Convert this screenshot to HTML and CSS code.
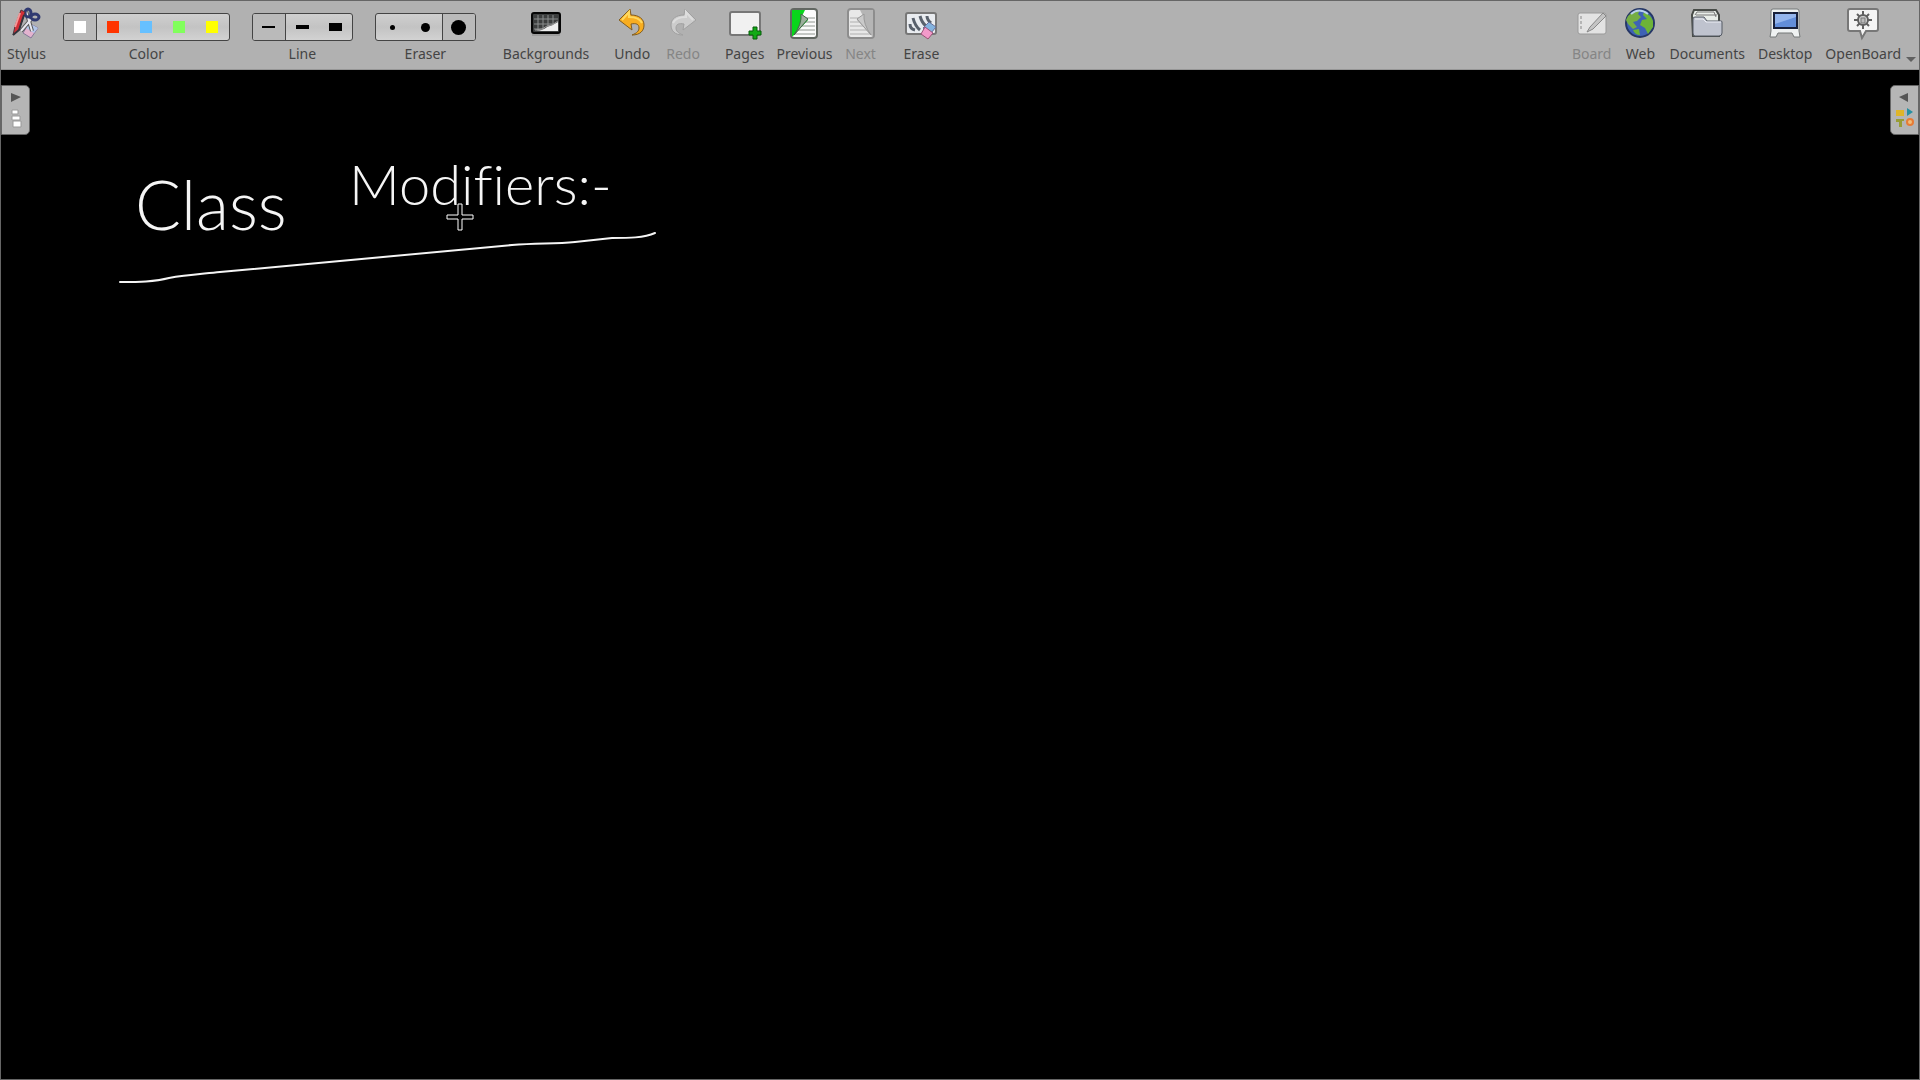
FILE: index.html
```html
<!DOCTYPE html>
<html lang="en">
  <head>
    <meta charset="UTF-8" />
    <meta name="viewport" content="width=device-width, initial-scale=1.0" />
    <title>OpenBoard</title>
    <link rel="stylesheet" href="styles.css">
  </head>
  <body>
    <header class="toolbar">
      <button type="button" class="tool">
        <svg class="icon" viewBox="0 0 32 32">
          <path d="M19 16l9 5-7 10-8-5z" fill="#e3b3cf" stroke="#85799a"/>
          <path d="M19 16l9 5-4 5-8-5z" fill="#b1c6e9"/>
          <path d="M16 4l6 20M23 10L11 24" stroke="#555" stroke-width="4"/>
          <path d="M16 4l6 20M23 10L11 24" stroke="#e8e8f0" stroke-width="2"/>
          <ellipse cx="18" cy="6" rx="3" ry="4" fill="none" stroke="#2f3971" stroke-width="3"/>
          <ellipse cx="25" cy="10" rx="4" ry="3" fill="none" stroke="#2f3971" stroke-width="3"/>
          <path d="M11 3l4 2-6 18-6 5 2-9z" fill="#d22f37" stroke="#51363d"/>
          <path d="M10 6L5 20" stroke="#f39999" stroke-width="2"/>
          <path d="M14 8L9 23l-6 5" fill="none" stroke="#33333c" stroke-width="2"/>
        </svg>
        <span>Stylus</span>
      </button>

      <div class="palettes">
        <div class="palette" role="group" aria-labelledby="colorLabel">
          <div class="choices">
            <button type="button" class="choice selected" aria-label="White"><i class="swatch white"></i></button>
            <button type="button" class="choice" aria-label="Red"><i class="swatch red"></i></button>
            <button type="button" class="choice" aria-label="Blue"><i class="swatch blue"></i></button>
            <button type="button" class="choice" aria-label="Green"><i class="swatch green"></i></button>
            <button type="button" class="choice" aria-label="Yellow"><i class="swatch yellow"></i></button>
          </div>
          <span id="colorLabel">Color</span>
        </div>
        <div class="palette" role="group" aria-labelledby="lineLabel">
          <div class="choices">
            <button type="button" class="choice selected" aria-label="Fine line"><i class="line fine"></i></button>
            <button type="button" class="choice" aria-label="Medium line"><i class="line medium"></i></button>
            <button type="button" class="choice" aria-label="Strong line"><i class="line strong"></i></button>
          </div>
          <span id="lineLabel">Line</span>
        </div>
        <div class="palette" role="group" aria-labelledby="eraserLabel">
          <div class="choices">
            <button type="button" class="choice" aria-label="Small eraser"><i class="dot small"></i></button>
            <button type="button" class="choice" aria-label="Medium eraser"><i class="dot middle"></i></button>
            <button type="button" class="choice selected" aria-label="Large eraser"><i class="dot large"></i></button>
          </div>
          <span id="eraserLabel">Eraser</span>
        </div>
      </div>

      <button type="button" class="tool">
        <svg class="icon" viewBox="0 0 32 32">
          <rect x="2" y="6" width="28" height="20" rx="2" fill="#3b3d3d" stroke="#050505" stroke-width="2"/>
          <path d="M4 12h24M4 17h24M4 22h16M8 8v16M13 8v16M18 8v12M23 8v10" stroke="#8b8e8e"/>
          <path d="M4 24q9 0 13-4 5-1 11-5v9z" fill="#eee"/>
          <path d="M5 23q8 0 12-4 5 0 11-5" fill="none" stroke="#999"/>
          <path d="M2 28h28" stroke="#888" stroke-width="1"/>
        </svg>
        <span>Backgrounds</span>
      </button>

      <div class="tools history">
        <button type="button" class="tool">
          <svg class="icon" viewBox="0 0 32 32">
            <path d="M3 13L14 2l1 6c8 0 13 4 13 10s-4 10-12 10c5-2 7-4 7-7 0-4-3-5-8-4l1 6z" fill="#f8ad20" stroke="#805c20"/>
            <path d="M6 13l7-8v5c8 0 11 2 13 6" fill="none" stroke="#ffd85e" stroke-width="2"/>
          </svg>
          <span>Undo</span>
        </button>
        <button type="button" class="tool" disabled>
          <svg class="icon" viewBox="0 0 32 32">
            <path d="M29 13L18 2l-1 6C9 8 4 12 4 18s4 10 12 10c-5-2-7-4-7-7 0-4 3-5 8-4l-1 6z" fill="#ccc" stroke="#a0a0a0"/>
            <path d="M26 13l-7-8v5C11 10 8 12 6 16" fill="none" stroke="#ddd" stroke-width="2"/>
          </svg>
          <span>Redo</span>
        </button>
      </div>

      <div class="tools pages">
        <button type="button" class="tool">
          <svg class="icon" viewBox="0 0 32 32">
            <rect x="1" y="5" width="30" height="23" rx="2" fill="#f1f1f1" stroke="#777" stroke-width="2"/>
            <path d="M24 20h4v4h4v4h-4v4h-4v-4h-4v-4h4z" fill="#12aa16" stroke="#075c0a"/>
          </svg>
          <span>Pages</span>
        </button>
        <button type="button" class="tool">
          <svg class="icon" viewBox="0 0 32 32">
            <rect x="3" y="2" width="26" height="29" rx="3" fill="#fbfbfb" stroke="#626762" stroke-width="2"/>
            <path d="M14 11h13M12 15h15M10 19h17M8 23h19M6 27h21" stroke="#909690"/>
            <path d="M4 3h13l-3 6 6 4L5 29H4z" fill="#08d51b"/>
            <path d="M13 7l7 5L6 28q8-11 7-21z" fill="#9cae9c" stroke="#426648"/>
          </svg>
          <span>Previous</span>
        </button>
        <button type="button" class="tool" disabled>
          <svg class="icon" viewBox="0 0 32 32">
            <rect x="3" y="2" width="26" height="29" rx="3" fill="#e8e8e8" stroke="#8d8d8d" stroke-width="2"/>
            <path d="M5 11h13M5 15h15M5 19h17M5 23h19M5 27h21" stroke="#b0b0b0"/>
            <path d="M28 3H15l3 6-6 4 15 16h1z" fill="#b5b5b5"/>
            <path d="M19 7l-7 5 14 16Q18 17 19 7z" fill="#cacaca" stroke="#999"/>
          </svg>
          <span>Next</span>
        </button>
      </div>

      <button type="button" class="tool">
        <svg class="icon" viewBox="0 0 32 32">
          <rect x="1" y="6" width="30" height="21" rx="2" fill="#e9ecf0" stroke="#777" stroke-width="2"/>
          <path d="M5 17q0 5 5 6M8 11q2 8 7 12M15 9q2 7 6 10M22 9q0 4 4 7" fill="none" stroke="#59616c" stroke-width="3"/>
          <path d="M24 15l7 5-5 6-8-5z" fill="#83b3df" stroke="#686f98"/>
          <path d="M20 20l8 6-5 6-7-5z" fill="#f39aca" stroke="#985477"/>
        </svg>
        <span>Erase</span>
      </button>

      <nav class="tools modes">
        <button type="button" class="tool" disabled>
          <svg class="icon" viewBox="0 0 32 32">
            <rect x="2" y="6" width="28" height="21" rx="2" fill="#e3e3e3" stroke="#999"/>
            <path d="M5 9v15" stroke="#b5b5b5" stroke-width="2" stroke-dasharray="3 2"/>
            <path d="M27 6L14 20l-3 5 6-3L30 9z" fill="#c4c4c4" stroke="#888"/>
          </svg>
          <span>Board</span>
        </button>
        <button type="button" class="tool">
          <svg class="icon" viewBox="0 0 32 32">
            <circle cx="16" cy="16" r="14" fill="#3e62b5" stroke="#263766" stroke-width="2"/>
            <path d="M4 9q5-6 12-6l-2 4 3 3-4 4-4 1 4 5-4 2-5-5-2-4z" fill="#75ae43"/>
            <path d="M20 5q7 3 9 9v6l-5 7-3-6-5-3 2-5 5-1-4-4zM9 23l6-1 1 6q-5 0-7-5z" fill="#6db338"/>
            <path d="M7 7Q15 0 24 7" fill="none" stroke="#b9d1ed" stroke-width="2"/>
          </svg>
          <span>Web</span>
        </button>
        <button type="button" class="tool">
          <svg class="icon" viewBox="0 0 32 32">
            <path d="M2 29L1 8l2-5h22l3 5v21z" fill="#e9eee9" stroke="#484c48" stroke-width="2"/>
            <path d="M4 8l2-3h17l2 5M5 8h21" fill="none" stroke="#777"/>
            <path d="M4 10h9l3 4h14q1 0 1 1v11q0 3-3 3H4q-2 0-2-3V12q0-2 2-2z" fill="#bfc3ce" stroke="#555b65"/>
            <path d="M4 12h8l3 3h15" fill="none" stroke="#edf0f6"/>
          </svg>
          <span>Documents</span>
        </button>
        <button type="button" class="tool">
          <svg class="icon" viewBox="0 0 32 32">
            <path d="M2 4q0-2 2-2h24q2 0 2 2v20l1 6h-6l-2-4H9l-2 4H1l1-6z" fill="#eff2f2" stroke="#747878"/>
            <rect x="5" y="6" width="23" height="15" fill="#628eda" stroke="#18213c" stroke-width="2"/>
            <path d="M6 7h21v3L6 17z" fill="#94b5ed"/>
          </svg>
          <span>Desktop</span>
        </button>
        <button type="button" class="tool">
          <svg class="icon" viewBox="0 0 32 32">
            <path d="M3 2h26q2 0 2 2v18q0 2-2 2H19l-4 7-2-7H3q-2 0-2-2V4q0-2 2-2z" fill="#f4f4f4" stroke="#777" stroke-width="2"/>
            <path d="M16 4v18M7 13h18M10 7l12 12M22 7L10 19" stroke="#606060" stroke-width="2"/>
            <circle cx="16" cy="13" r="5" fill="#d5d5d5" stroke="#606060" stroke-width="2"/>
            <rect x="14" y="11" width="4" height="5" fill="#bbb" stroke="#777"/>
          </svg>
          <span>OpenBoard</span>
        </button>
        <svg class="more" viewBox="0 0 10 6"><path d="M0 0h10L5 5z" fill="#606060"/></svg>
      </nav>
    </header>

    <main class="board">
      <p class="ink class-word">Class</p>
      <p class="ink modifiers-word">Modifiers:-</p>
      <svg class="strokes" width="680" height="240">
        <path d="M119 212C138 212 153 212 168 208C185 205 201 204 219 202L339 191L511 175C537 173 553 174 574 172L611 168C627 168 643 168 654 163" fill="none" stroke="#f5f5f5" stroke-width="2" stroke-linecap="round"/>
        <path d="M457 134h4v11h11v4h-11v11h-4v-11h-11v-4h11z" fill="#000" stroke="#fff"/>
      </svg>

      <button type="button" class="tab tab-left" aria-label="Show pages">
        <svg width="27" height="48" viewBox="0 0 27 48">
          <path d="M9 7l10 4-10 5z" fill="#555"/>
          <path d="M10 24h6v4h-6zM10 30h8v4h-8zM11 35h8v6h-8z" fill="#fff" stroke="#999"/>
        </svg>
      </button>
      <button type="button" class="tab tab-right" aria-label="Show library">
        <svg width="27" height="48" viewBox="0 0 27 48">
          <path d="M17 7L8 11l9 5z" fill="#555"/>
          <path d="M5 24h8v6H5z" fill="#dfb52a"/>
          <path d="M16 22l6 4-6 4z" fill="#258fa2"/>
          <path d="M5 33h8v2h-2v6H8v-5H5z" fill="#989d35"/>
          <circle cx="19" cy="36" r="3" fill="#f1bd7a" stroke="#e77b35" stroke-width="2"/>
        </svg>
      </button>
    </main>
  </body>
</html>
```
FILE: styles.css
```css
* {
  box-sizing: border-box;
}
body {
  margin: 0;
  min-height: 100vh;
  display: flex;
  flex-direction: column;
  background-color: #000;
  border: 1px solid #666;
  font-family: "Noto Sans", sans-serif;
  font-size: 14px;
  line-height: 18px;
  color: #444;
}
button {
  margin: 0;
  padding: 0;
  border: none;
  background: none;
  font: inherit;
  color: inherit;
}
.toolbar {
  display: flex;
  align-items: flex-start;
  gap: 27px;
  padding: 6px 3px 6px 6px;
  background-color: #b1b1b1;
  border-bottom: 1px solid #969696;
}
.tool {
  display: flex;
  flex-direction: column;
  align-items: center;
  gap: 6px;
}
.tool:disabled {
  color: #858585;
}
.icon {
  width: 32px;
  height: 32px;
  overflow: visible;
  fill: none;
}
.tools {
  display: flex;
  gap: 13px;
}
.history {
  gap: 16px;
  margin: 0 -2px;
}
.pages {
  gap: 12px;
}
.palettes {
  display: flex;
  gap: 22px;
  margin-left: -10px;
}
.palette {
  display: flex;
  flex-direction: column;
  align-items: center;
  gap: 4px;
  padding-top: 6px;
}
.choices {
  display: flex;
  border: 1px solid #444;
  border-radius: 3px;
  background: linear-gradient(#cfcfcf, #c3c3c3 50%, #d2d2d2);
  overflow: hidden;
}
.choice {
  width: 33px;
  height: 26px;
  display: flex;
  align-items: center;
  justify-content: center;
}
.choice.selected {
  background-color: #bababa;
}
.choice.selected:first-child {
  border-right: 1px solid #444;
}
.choice.selected:last-child {
  border-left: 1px solid #444;
}
.swatch {
  width: 12px;
  height: 12px;
}
.white {
  background-color: #fff;
}
.red {
  background-color: #ff3400;
}
.blue {
  background-color: #66c0ff;
}
.green {
  background-color: #81ff5c;
}
.yellow {
  background-color: #ff0;
}
.line {
  width: 13px;
  background-color: #000;
}
.fine {
  height: 2px;
}
.medium {
  height: 4px;
}
.strong {
  height: 8px;
}
.dot {
  border-radius: 50%;
  background-color: #000;
}
.small {
  width: 5px;
  height: 5px;
}
.middle {
  width: 9px;
  height: 9px;
}
.large {
  width: 15px;
  height: 15px;
}
.modes {
  margin-left: auto;
}
.more {
  width: 10px;
  height: 6px;
  margin-left: -8px;
  align-self: flex-end;
}
.board {
  position: relative;
  flex: 1;
  background-color: #000;
}
.ink {
  position: absolute;
  margin: 0;
  font-family: Lato, sans-serif;
  font-weight: 300;
  font-variant-ligatures: none;
  line-height: 80px;
  color: #f5f5f5;
  white-space: nowrap;
}
.class-word {
  left: 134px;
  top: 94px;
  font-size: 68px;
}
.modifiers-word {
  left: 348px;
  top: 74px;
  font-size: 56px;
}
.strokes {
  position: absolute;
  left: 0;
  top: 0;
}
.tab {
  position: absolute;
  top: 15px;
  height: 50px;
  background-color: #b5b5b5;
  border: 1px solid #666;
}
.tab svg {
  display: block;
}
.tab-left {
  left: 0;
  border-radius: 0 5px 5px 0;
}
.tab-right {
  right: 0;
  border-radius: 5px 0 0 5px;
}
```
